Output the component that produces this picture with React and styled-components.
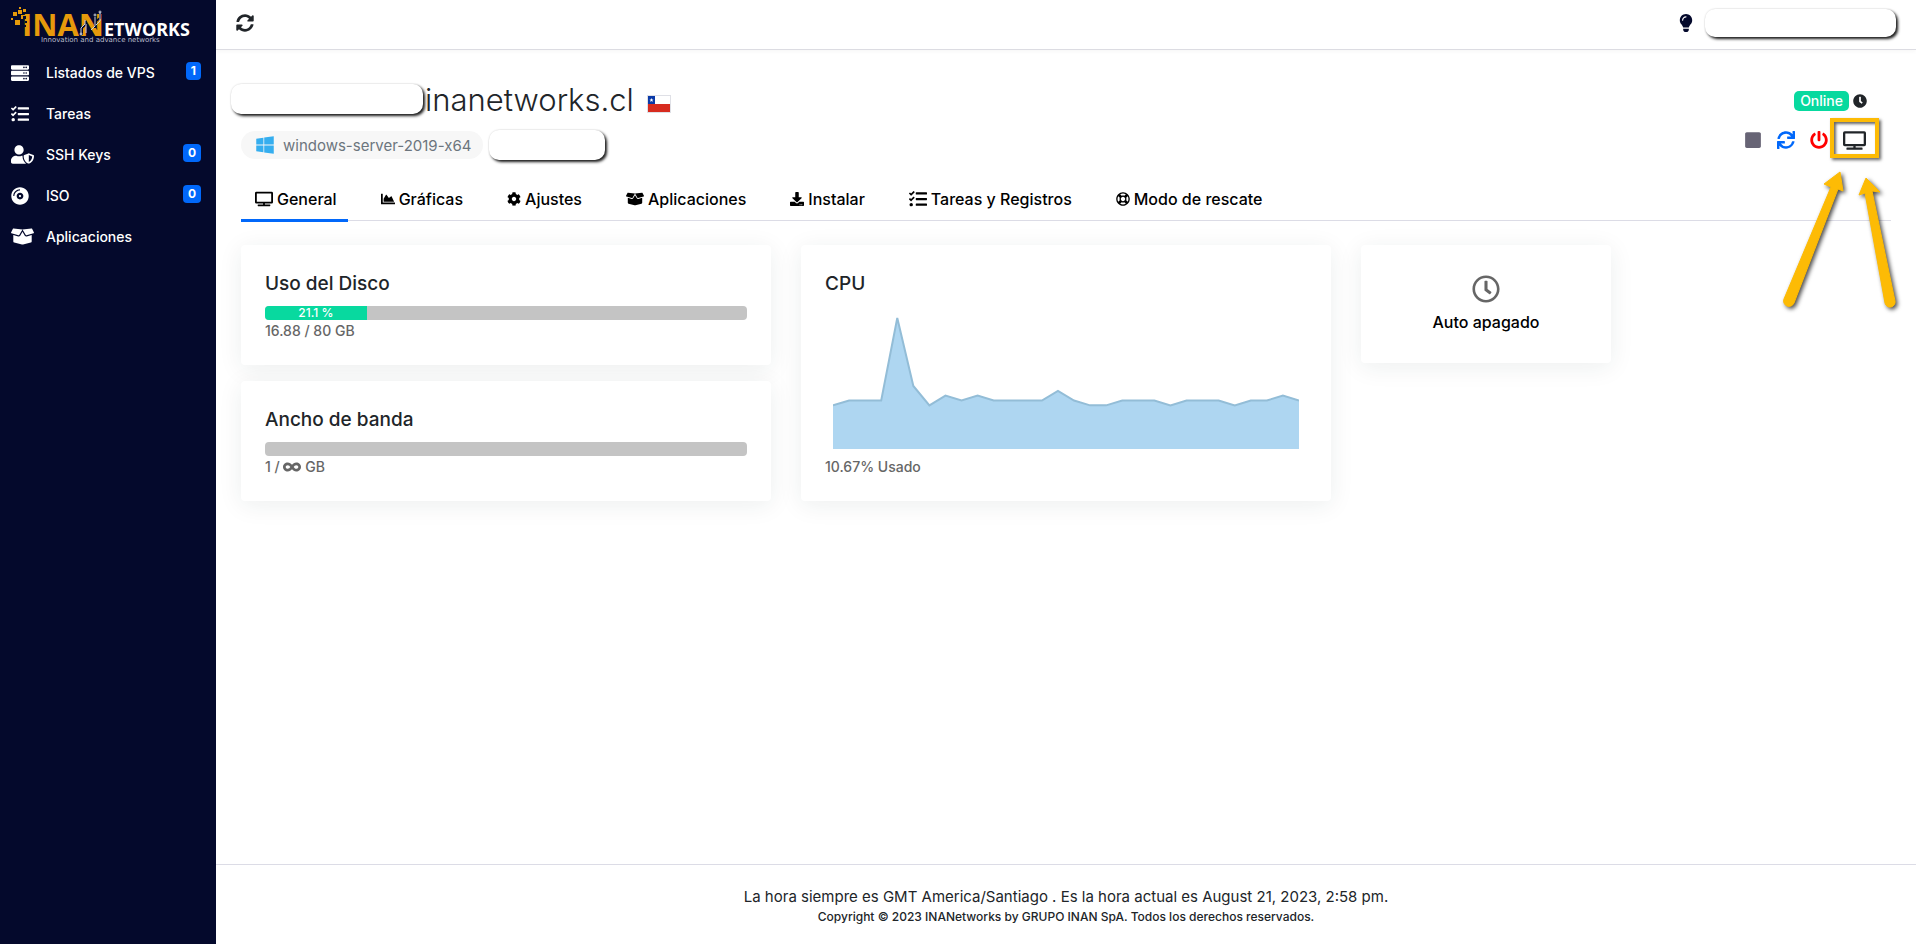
import React from 'react'
import styled, { createGlobalStyle } from 'styled-components'
import {
  FaBoxOpen, FaChartArea, FaClock, FaCog, FaCompactDisc, FaDownload, FaInfinity,
  FaLightbulb, FaPowerOff, FaRegClock, FaRegLifeRing, FaServer, FaStop, FaSync,
  FaSyncAlt, FaTasks, FaTv, FaUserShield, FaWindows,
} from 'react-icons/fa'

const menu = [
  { label: 'Listados de VPS', icon: FaServer, badge: 1 },
  { label: 'Tareas', icon: FaTasks },
  { label: 'SSH Keys', icon: FaUserShield, badge: 0, wide: true },
  { label: 'ISO', icon: FaCompactDisc, badge: 0 },
  { label: 'Aplicaciones', icon: FaBoxOpen, wide: true },
]

const tabs = [
  { label: 'General', icon: FaTv, wide: true },
  { label: 'Gráficas', icon: FaChartArea },
  { label: 'Ajustes', icon: FaCog },
  { label: 'Aplicaciones', icon: FaBoxOpen, wide: true },
  { label: 'Instalar', icon: FaDownload },
  { label: 'Tareas y Registros', icon: FaTasks, wide: true },
  { label: 'Modo de rescate', icon: FaRegLifeRing },
]

const cpu = [
  9, 10, 10, 10, 27, 13, 9, 11, 10, 11, 10, 10, 10, 10, 12,
  10, 9, 9, 10, 10, 10, 9, 10, 10, 10, 9, 10, 10, 11, 10,
]

const Logo = () => (
  <LogoSvg viewBox="0 0 184 38" role="img" aria-label="INANetworks">
    <g fill="#e69a0b">
      <rect x="2" y="6" width="4" height="4" />
      <rect x="8" y="1" width="2" height="2" />
      <rect x="7" y="4" width="4" height="4" />
      <rect x="12" y="3" width="3" height="3" />
      <rect x="0" y="12" width="2" height="2" />
      <rect x="4" y="14" width="5" height="5" />
      <rect x="10" y="9" width="4" height="4" />
    </g>
    <text x="11" y="30" fontSize="31" fontWeight="700" fill="#e69a0b" fontFamily="'Open Sans', sans-serif">INAN</text>
    <g fill="#04092c">
      <rect x="12" y="10" width="3" height="3" />
      <rect x="14" y="15" width="2" height="2" />
      <rect x="12" y="19" width="3" height="2" />
    </g>
    <g fill="none" stroke="#04092c" strokeWidth="2">
      <path d="M71 29v-7l4-4v-3" />
      <path d="M84 22v-6l5-4V6" />
    </g>
    <g fill="none" stroke="#c9cddd" strokeWidth="1">
      <path d="M70 29v-7l4-4v-4M75 27V18" />
      <path d="M80 24l4-4v-9M85 19l4-4V6" />
      <circle cx="89" cy="6" r="1" />
      <circle cx="84" cy="9" r="1" />
      <circle cx="70" cy="28" r="1" />
    </g>
    <text x="93" y="30" fontSize="18" fontWeight="700" fill="#fff" fontFamily="'Open Sans', sans-serif">ETWORKS</text>
    <text x="30" y="36" fontSize="7" fill="#b9bccb" fontFamily="'DejaVu Sans', sans-serif">Innovation and advance networks</text>
  </LogoSvg>
)

const CpuChart = () => {
  const points = cpu.map((value, i) => `${(i * 466) / (cpu.length - 1)},${134 - value * 4.85}`).join(' ')
  return (
    <ChartSvg viewBox="0 0 466 134" preserveAspectRatio="none" role="img" aria-label="Uso de CPU">
      <polygon points={`0,134 ${points} 466,134`} fill="#aed6f1" />
      <polyline points={points} fill="none" stroke="#93bdd7" strokeWidth="2" />
    </ChartSvg>
  )
}

const Flag = () => (
  <FlagSvg viewBox="0 0 24 18" role="img" aria-label="Chile">
    <rect width="24" height="18" fill="#dfe0e6" />
    <rect x="1" y="1" width="22" height="8" fill="#fff" />
    <rect x="1" y="9" width="22" height="8" fill="#d72b1f" />
    <rect x="1" y="1" width="7" height="8" fill="#0a3aa8" />
    <path d="M4.5 3l.6 1.5h1.4l-1.1 1 .4 1.5-1.3-.9-1.3.9.4-1.5-1.1-1h1.4z" fill="#fff" />
  </FlagSvg>
)

const Arrows = () => (
  <ArrowsSvg viewBox="0 0 124 148" aria-hidden="true">
    <g fill="#fdbb05" stroke="#fdbb05" strokeWidth="1" strokeLinejoin="round">
      <path d="M60 4l3 19-5-2-44 114a5 5 0 0 1-10-4L51 19l-7-3z" />
      <path d="M86 10l14 14-8-1 23 110a5 5 0 0 1-10 2L85 25l-6 2z" />
    </g>
  </ArrowsSvg>
)

export default function App() {
  return (
    <>
      <GlobalStyle />
      <Page>
        <Sidebar>
          <Logo />
          <Menu>
            {menu.map(({ label, icon: Icon, badge, wide }) => (
              <MenuLink href="#" key={label}>
                <MenuIcon $wide={wide}><Icon /></MenuIcon>
                {label}
                {badge !== undefined && <Badge>{badge}</Badge>}
              </MenuLink>
            ))}
          </Menu>
        </Sidebar>
        <Content>
          <TopBar>
            <IconButton aria-label="Actualizar" $color="#212529"><FaSyncAlt /></IconButton>
            <TopBarRight>
              <IconButton aria-label="Cambiar tema" $color="#04092c"><FaLightbulb /></IconButton>
              <Blank $width={191} $height={28} />
            </TopBarRight>
          </TopBar>
          <Main>
            <ServerHeader>
              <div>
                <TitleRow>
                  <Blank $width={192} $height={30} />
                  <Title>inanetworks.cl</Title>
                  <Flag />
                </TitleRow>
                <SystemRow>
                  <System><FaWindows />windows-server-2019-x64</System>
                  <Blank $width={116} $height={30} />
                </SystemRow>
              </div>
              <ServerStatus>
                <StatusRow><Online>Online</Online><FaClock /></StatusRow>
                <Actions>
                  <IconButton aria-label="Detener" $color="#676475"><FaStop /></IconButton>
                  <IconButton aria-label="Reiniciar" $color="#0168fa"><FaSync /></IconButton>
                  <IconButton aria-label="Apagar" $color="#ff0000"><FaPowerOff /></IconButton>
                  <ConsoleButton aria-label="Consola"><FaTv /></ConsoleButton>
                </Actions>
                <Arrows />
              </ServerStatus>
            </ServerHeader>
            <Tabs role="tablist">
              {tabs.map(({ label, icon: Icon, wide }, i) => (
                <Tab key={label} role="tab" aria-selected={i === 0} $active={i === 0} $wide={wide}>
                  <Icon />{label}
                </Tab>
              ))}
            </Tabs>
            <Cards>
              <Column>
                <Card>
                  <CardTitle>Uso del Disco</CardTitle>
                  <Progress><Bar style={{ width: '21.1%' }}>21.1 %</Bar></Progress>
                  <CardText>16.88 / 80 GB</CardText>
                </Card>
                <Card>
                  <CardTitle>Ancho de banda</CardTitle>
                  <Progress />
                  <CardText>1 / <FaInfinity /> GB</CardText>
                </Card>
              </Column>
              <Card>
                <CardTitle>CPU</CardTitle>
                <CpuChart />
                <CardText>10.67% Usado</CardText>
              </Card>
              <ShutdownCard>
                <FaRegClock />
                Auto apagado
              </ShutdownCard>
            </Cards>
          </Main>
          <Footer>
            <FooterTime>La hora siempre es GMT America/Santiago . Es la hora actual es August 21, 2023, 2:58 pm.</FooterTime>
            <Copyright>Copyright © 2023 INANetworks by GRUPO INAN SpA. Todos los derechos reservados.</Copyright>
          </Footer>
        </Content>
      </Page>
    </>
  )
}

const GlobalStyle = createGlobalStyle`
  * {
    box-sizing: border-box;
  }
  body {
    margin: 0;
    background: #fff;
    color: #212529;
    font-family: Inter, sans-serif;
    font-size: 14px;
    font-weight: 500;
  }
  button {
    font: inherit;
    border: none;
    background: none;
    padding: 0;
  }
  svg {
    flex-shrink: 0;
  }
`;

const Page = styled.div`
  display: flex;
  min-height: 100vh;
`;

const Sidebar = styled.aside`
  width: 216px;
  flex-shrink: 0;
  background: #04092c;
`;

const LogoSvg = styled.svg`
  display: block;
  width: 184px;
  height: 38px;
  margin: 6px 0 8px 11px;
  overflow: visible;
`;

const Menu = styled.nav`
  display: flex;
  flex-direction: column;
`;

const MenuLink = styled.a`
  display: flex;
  align-items: center;
  height: 41px;
  padding: 0 15px 0 11px;
  color: #fff;
  text-decoration: none;
`;

const MenuIcon = styled.span`
  display: flex;
  width: 35px;
  font-size: ${({ $wide }) => ($wide ? 23 : 18)}px;
`;

const Badge = styled.span`
  margin: 0 0 4px auto;
  padding: 0 5px;
  border-radius: 4px;
  background: #0168fa;
  font-size: 12px;
  font-weight: 700;
  line-height: 18px;
`;

const Content = styled.div`
  display: flex;
  flex-direction: column;
  flex: 1;
  min-width: 0;
`;

const TopBar = styled.header`
  display: flex;
  align-items: center;
  justify-content: space-between;
  height: 50px;
  padding: 0 20px 4px;
  border-bottom: 1px solid #dcdce2;
  box-shadow: 0 2px 4px rgba(0, 0, 0, 0.03);
`;

const TopBarRight = styled.div`
  display: flex;
  align-items: center;
  gap: 10px;
`;

const IconButton = styled.button`
  display: flex;
  color: ${({ $color }) => $color};
  font-size: 18px;
`;

const Blank = styled.span`
  width: ${({ $width }) => $width}px;
  height: ${({ $height }) => $height}px;
  border-radius: 10px;
  background: #fff;
  box-shadow: 0 0 2px rgba(0, 0, 0, 0.15), 2px 2px 3px rgba(0, 0, 0, 0.9);
`;

const Main = styled.main`
  flex: 1;
  padding: 26px 25px 30px;
`;

const ServerHeader = styled.div`
  display: flex;
  justify-content: space-between;
`;

const TitleRow = styled.div`
  display: flex;
  align-items: center;
  height: 46px;
  margin-left: -10px;
`;

const Title = styled.h1`
  margin: 0 13px 0 2px;
  font-size: 31px;
  font-weight: 300;
`;

const FlagSvg = styled.svg`
  width: 24px;
  height: 18px;
  margin-top: 10px;
`;

const SystemRow = styled.div`
  display: flex;
  align-items: center;
  gap: 6px;
  margin-top: 8px;
`;

const System = styled.span`
  display: flex;
  align-items: center;
  gap: 8px;
  height: 28px;
  padding: 0 12px 0 14px;
  border-radius: 14px;
  background: #f7f7f7;
  color: #6c757d;
  font-size: 15px;
  font-weight: 400;

  svg {
    color: #35aeef;
    font-size: 20px;
  }
`;

const ServerStatus = styled.div`
  position: relative;
  display: flex;
  flex-direction: column;
  align-items: flex-end;
  padding: 15px 12px 0 0;
`;

const StatusRow = styled.div`
  display: flex;
  align-items: center;
  gap: 4px;
  padding-right: 12px;
`;

const Online = styled.span`
  padding: 0 6px;
  border-radius: 5px;
  background: #08d99f;
  color: #fff;
  line-height: 20px;
`;

const Actions = styled.div`
  display: flex;
  align-items: center;
  margin-top: 7px;
  gap: 15px;

  ${IconButton} {
    margin-top: 4px;
  }
`;

const ConsoleButton = styled.button`
  display: flex;
  align-items: center;
  justify-content: center;
  width: 49px;
  height: 40px;
  margin-left: -13px;
  padding-top: 4px;
  border: 4px solid #fdbb05;
  color: #212529;
  font-size: 23px;
  box-shadow: 2px 2px 3px rgba(0, 0, 0, 0.6), inset 2px 2px 3px rgba(0, 0, 0, 0.6);
`;

const ArrowsSvg = styled.svg`
  position: absolute;
  top: 92px;
  right: -13px;
  width: 124px;
  height: 148px;
  z-index: 1;
  pointer-events: none;
  filter: drop-shadow(2px 2px 2px rgba(0, 0, 0, 0.7));
`;

const Tabs = styled.div`
  display: flex;
  gap: 19px;
  margin-top: 19px;
  border-bottom: 1px solid #dcdce6;
`;

const Tab = styled.button`
  display: flex;
  align-items: center;
  gap: 4px;
  height: 43px;
  margin-bottom: -2px;
  padding: 0 11px 0 14px;
  border-bottom: 3px solid ${({ $active }) => ($active ? '#0168fa' : 'transparent')};
  color: #000;
  font-size: 16px;

  svg {
    font-size: ${({ $wide }) => ($wide ? 18 : 14)}px;
  }
`;

const Cards = styled.div`
  display: grid;
  grid-template-columns: 530fr 530fr 250fr 250fr;
  align-items: start;
  gap: 30px;
  margin-top: 24px;
`;

const Column = styled.div`
  display: grid;
  gap: 16px;
`;

const Card = styled.section`
  padding: 24px;
  border-radius: 4px;
  background: #fff;
  box-shadow: 0 4px 24px rgba(30, 50, 50, 0.08);
`;

const CardTitle = styled.h2`
  margin: 0 0 7px;
  font-size: 19px;
  font-weight: 500;
  line-height: 30px;
`;

const Progress = styled.div`
  height: 14px;
  border-radius: 4px;
  background: #c4c4c4;
  overflow: hidden;
`;

const Bar = styled.div`
  height: 100%;
  background: #08d99f;
  color: #fff;
  font-size: 12px;
  line-height: 14px;
  text-align: center;
`;

const CardText = styled.p`
  margin: 0;
  color: #666;
  line-height: 21px;

  svg {
    font-size: 18px;
    vertical-align: -4px;
  }
`;

const ChartSvg = styled.svg`
  display: block;
  width: calc(100% - 16px);
  height: 134px;
  margin: 16px 8px 7px;
`;

const ShutdownCard = styled(Card)`
  display: flex;
  flex-direction: column;
  align-items: center;
  gap: 9px;
  height: 118px;
  padding-top: 30px;
  color: #000;
  font-size: 16px;

  svg {
    color: #666;
    font-size: 28px;
  }
`;

const Footer = styled.footer`
  padding: 21px 0 18px;
  border-top: 1px solid #dcdce6;
  text-align: center;
`;

const FooterTime = styled.p`
  margin: 0;
  font-size: 15px;
  font-weight: 400;
  line-height: 21px;
`;

const Copyright = styled.p`
  margin: 0;
  font-size: 12px;
  line-height: 19px;
`;
